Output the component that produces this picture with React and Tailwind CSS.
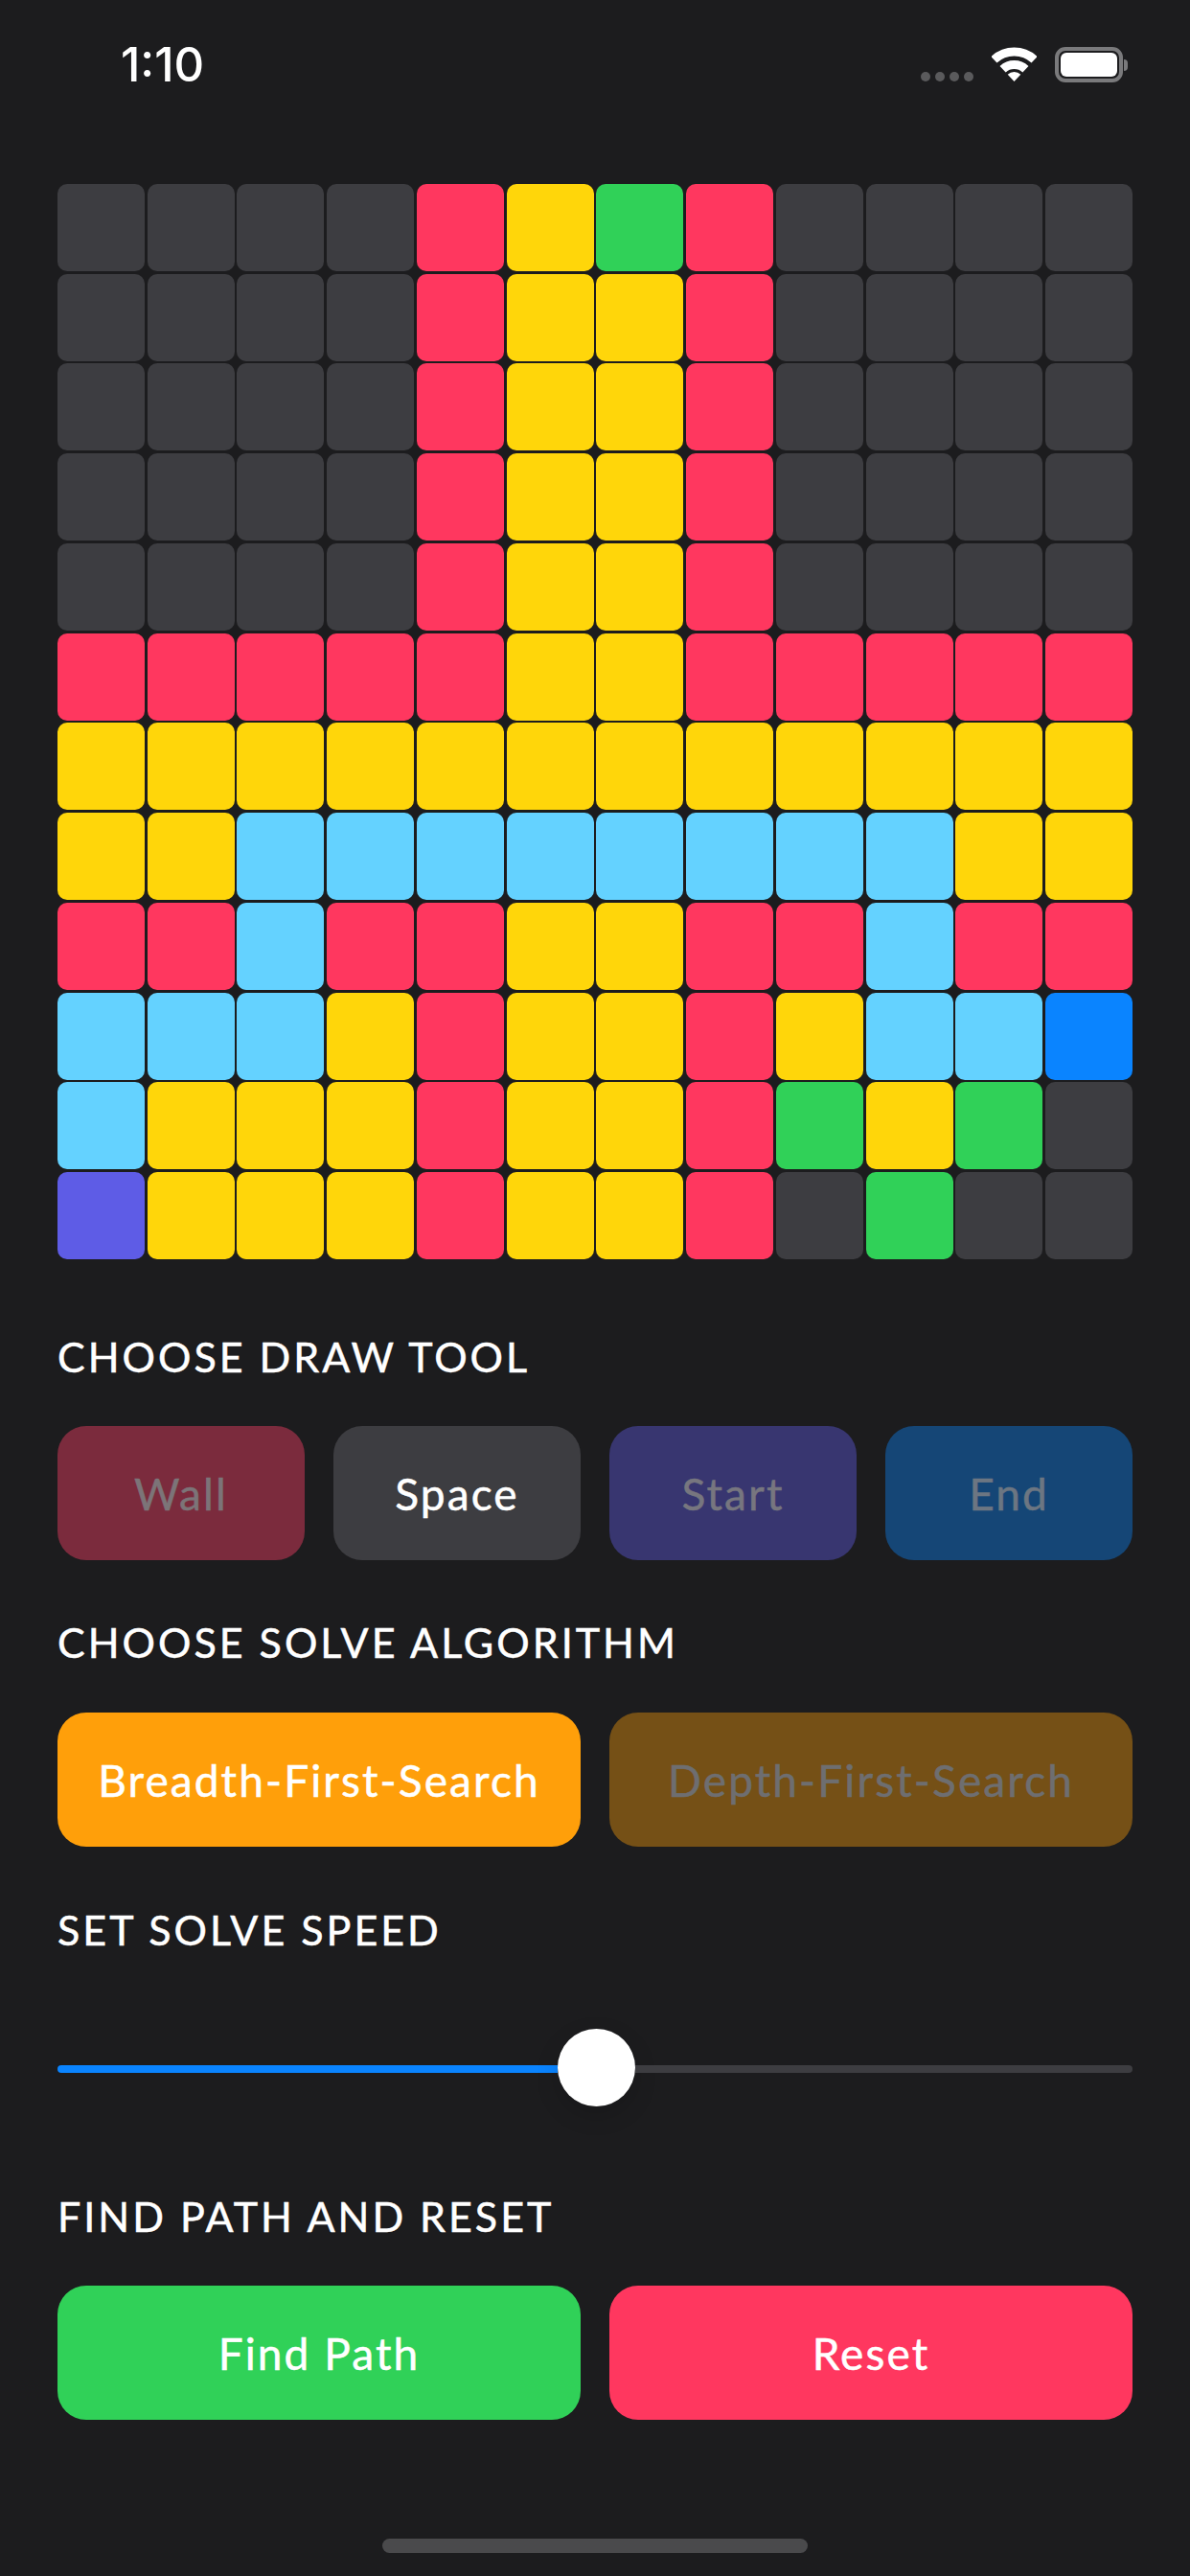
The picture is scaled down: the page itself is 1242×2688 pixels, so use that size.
const ROWS = [
  '....RYGR....',
  '....RYYR....',
  '....RYYR....',
  '....RYYR....',
  '....RYYR....',
  'RRRRRYYRRRRR',
  'YYYYYYYYYYYY',
  'YYBBBBBBBBYY',
  'RRBRRYYRRBRR',
  'BBBYRYYRYBBE',
  'BYYYRYYRGYG.',
  'PYYYRYYR.G..',
]

const CELL = {
  '.': 'bg-[#3d3d41]',
  R: 'bg-[#ff375f]',
  Y: 'bg-[#ffd60a]',
  G: 'bg-[#30d158]',
  B: 'bg-[#64d2ff]',
  P: 'bg-[#5e5ce6]',
  E: 'bg-[#0a84ff]',
}

function StatusBar() {
  return (
    <div className="flex h-[86px] items-start pt-[45px] pl-[126px] pr-[65px]">
      <div className="text-[49px] leading-[46px] font-medium text-white [font-family:Inter,sans-serif]">1:10</div>
      <div className="ml-auto flex items-start pt-[4px]">
        {/* signal dots */}
        <div className="mt-[26px] flex gap-[5px]">
          <div className="h-[10px] w-[10px] rounded-full bg-[#5a5a5c]"></div>
          <div className="h-[10px] w-[10px] rounded-full bg-[#5a5a5c]"></div>
          <div className="h-[10px] w-[10px] rounded-full bg-[#5a5a5c]"></div>
          <div className="h-[10px] w-[10px] rounded-full bg-[#5a5a5c]"></div>
        </div>
        <svg className="ml-[19px]" width="47" height="36" viewBox="0 0 47 36" fill="none">
          <path d="M2.4 13.3A31 31 0 0 1 44.6 13.3" stroke="#fff" strokeWidth="9" />
          <path d="M11.6 23.2A17.5 17.5 0 0 1 35.4 23.2" stroke="#fff" strokeWidth="9" />
          <path d="M23.5 36L16.7 28.7A10 10 0 0 1 30.3 28.7Z" fill="#fff" />
        </svg>
        {/* battery */}
        <div className="ml-[19px] flex items-center">
          <div className="h-[37px] w-[71px] rounded-[11px] border-[4px] border-[#7a7a7c] p-[2px]">
            <div className="h-full w-full rounded-[6px] bg-white"></div>
          </div>
          <div className="ml-[1px] h-[12px] w-[4px] rounded-r-full bg-[#7a7a7c]"></div>
        </div>
      </div>
    </div>
  )
}

function Label({ children, className }) {
  return <div className={`h-[44px] text-[43px] leading-[44px] tracking-[3px] text-white [-webkit-text-stroke:0.5px_currentColor] ${className}`}>{children}</div>
}

function Btn({ bg, text = 'text-white', children }) {
  return (
    <div className={`flex h-[140px] flex-1 items-center justify-center rounded-[30px] text-[46px] tracking-[2.1px] [-webkit-text-stroke:0.5px_currentColor] ${bg} ${text}`}>
      {children}
    </div>
  )
}

export default function App() {
  return (
    <div className="min-h-screen bg-[#1c1c1e] [font-family:Lato,sans-serif]">
      <StatusBar />
      <div className="px-[60px]">
        <div className="mt-[106px] grid grid-cols-12 gap-[2.75px]">
          {ROWS.join('').split('').map((c, i) => (
            <div key={i} className={`aspect-square rounded-[10px] ${CELL[c]}`}></div>
          ))}
        </div>

        <Label className="mt-[80px]">CHOOSE DRAW TOOL</Label>
        <div className="mt-[50px] flex gap-[30px]">
          <Btn bg="bg-[#7b2b3d]" text="text-[#7c7478]">Wall</Btn>
          <Btn bg="bg-[#3d3d41]">Space</Btn>
          <Btn bg="bg-[#383670]" text="text-[#77767f]">Start</Btn>
          <Btn bg="bg-[#154676]" text="text-[#6c7682]">End</Btn>
        </div>

        <Label className="mt-[64px]">CHOOSE SOLVE ALGORITHM</Label>
        <div className="mt-[51px] flex gap-[30px]">
          <Btn bg="bg-[#ff9f0a]">Breadth-First-Search</Btn>
          <Btn bg="bg-[#755016]" text="text-[#6e6e70]">Depth-First-Search</Btn>
        </div>

        <Label className="mt-[65px]">SET SOLVE SPEED</Label>
        {/* speed slider */}
        <div className="mt-[81px] flex h-[81px] items-start">
          <div className="mt-[38px] h-[8px] w-[522px] rounded-l-full bg-[#0a84ff]"></div>
          <div className="h-[81px] w-[81px] flex-none rounded-full bg-white shadow-[0_9px_24px_rgba(0,0,0,0.15)]"></div>
          <div className="mt-[38px] h-[8px] flex-1 rounded-r-full bg-[#3d3d41]"></div>
        </div>

        <Label className="mt-[93px]">FIND PATH AND RESET</Label>
        <div className="mt-[50px] flex gap-[30px]">
          <Btn bg="bg-[#30d158]">Find Path</Btn>
          <Btn bg="bg-[#ff375f]">Reset</Btn>
        </div>

        <div className="mt-[124px] flex justify-center">
          <div className="h-[15px] w-[444px] rounded-full bg-[#4a4a4c]"></div>
        </div>
      </div>
    </div>
  )
}
